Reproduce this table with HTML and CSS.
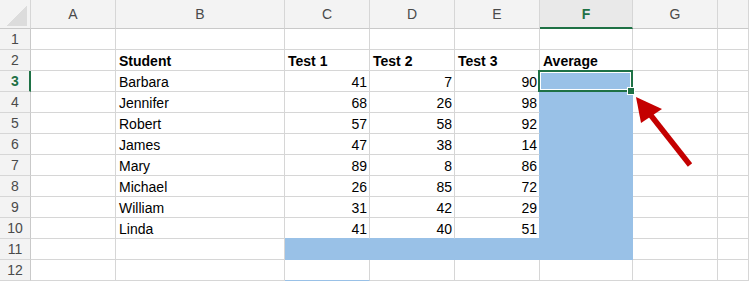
FILE: index.html
```html
<!DOCTYPE html>
<html lang="en">
<head>
<meta charset="utf-8">
<title>Test scores</title>
<link rel="stylesheet" href="styles.css">
</head>
<body>
<div class="sheet">
  <!-- column headers -->
  <div class="hd corner"><span class="tri"></span></div>
  <div class="hd">A</div>
  <div class="hd">B</div>
  <div class="hd">C</div>
  <div class="hd">D</div>
  <div class="hd">E</div>
  <div class="hd hd-active">F</div>
  <div class="hd">G</div>
  <div class="hd"></div>

  <!-- row 1 -->
  <div class="rh">1</div>
  <div class="c"></div><div class="c"></div><div class="c"></div><div class="c"></div><div class="c"></div><div class="c"></div><div class="c"></div><div class="c"></div>

  <!-- row 2 -->
  <div class="rh">2</div>
  <div class="c"></div>
  <div class="c b">Student</div>
  <div class="c b">Test 1</div>
  <div class="c b">Test 2</div>
  <div class="c b">Test 3</div>
  <div class="c b">Average</div>
  <div class="c"></div><div class="c"></div>

  <!-- row 3 -->
  <div class="rh rh-active">3</div>
  <div class="c"></div>
  <div class="c">Barbara</div>
  <div class="c n">41</div>
  <div class="c n">7</div>
  <div class="c n">90</div>
  <div class="c sel active"><span class="cursor"></span><span class="handle"></span></div>
  <div class="c"></div><div class="c"></div>

  <!-- row 4 -->
  <div class="rh">4</div>
  <div class="c"></div>
  <div class="c">Jennifer</div>
  <div class="c n">68</div>
  <div class="c n">26</div>
  <div class="c n edge-r">98</div>
  <div class="c sel"></div>
  <div class="c"></div><div class="c"></div>

  <!-- row 5 -->
  <div class="rh">5</div>
  <div class="c"></div>
  <div class="c">Robert</div>
  <div class="c n">57</div>
  <div class="c n">58</div>
  <div class="c n edge-r">92</div>
  <div class="c sel"></div>
  <div class="c"></div><div class="c"></div>

  <!-- row 6 -->
  <div class="rh">6</div>
  <div class="c"></div>
  <div class="c">James</div>
  <div class="c n">47</div>
  <div class="c n">38</div>
  <div class="c n edge-r">14</div>
  <div class="c sel"></div>
  <div class="c"></div><div class="c"></div>

  <!-- row 7 -->
  <div class="rh">7</div>
  <div class="c"></div>
  <div class="c">Mary</div>
  <div class="c n">89</div>
  <div class="c n">8</div>
  <div class="c n edge-r">86</div>
  <div class="c sel"></div>
  <div class="c"></div><div class="c"></div>

  <!-- row 8 -->
  <div class="rh">8</div>
  <div class="c"></div>
  <div class="c">Michael</div>
  <div class="c n">26</div>
  <div class="c n">85</div>
  <div class="c n edge-r">72</div>
  <div class="c sel"></div>
  <div class="c"></div><div class="c"></div>

  <!-- row 9 -->
  <div class="rh">9</div>
  <div class="c"></div>
  <div class="c">William</div>
  <div class="c n">31</div>
  <div class="c n">42</div>
  <div class="c n edge-r">29</div>
  <div class="c sel"></div>
  <div class="c"></div><div class="c"></div>

  <!-- row 10 -->
  <div class="rh">10</div>
  <div class="c"></div>
  <div class="c">Linda</div>
  <div class="c n edge-b">41</div>
  <div class="c n edge-b">40</div>
  <div class="c n edge-b edge-r">51</div>
  <div class="c sel"></div>
  <div class="c"></div><div class="c"></div>

  <!-- row 11 -->
  <div class="rh">11</div>
  <div class="c"></div>
  <div class="c"></div>
  <div class="c sel"></div>
  <div class="c sel"></div>
  <div class="c sel"></div>
  <div class="c sel"></div>
  <div class="c"></div><div class="c"></div>

  <!-- row 12 -->
  <div class="rh">12</div>
  <div class="c"></div>
  <div class="c"></div>
  <div class="c edge-b"></div>
  <div class="c"></div>
  <div class="c"></div>
  <div class="c"></div>
  <div class="c"></div><div class="c"></div>

  <!-- callout arrow pointing at the fill handle -->
  <svg class="arrow" width="749" height="281" viewBox="0 0 749 281" aria-hidden="true">
    <line x1="690" y1="165" x2="649" y2="113" stroke="#c40000" stroke-width="5.5"/>
    <polygon points="636,97 662,109 641,123" fill="#c40000"/>
  </svg>
</div>
</body>
</html>
```

FILE: styles.css
```css
* {
  box-sizing: border-box;
}

html, body {
  margin: 0;
  padding: 0;
  background: #ffffff;
}

body {
  font-family: "Liberation Sans", Arial, sans-serif;
  font-size: 14px;
  color: #000000;
  overflow: hidden;
}

.sheet {
  position: relative;
  display: grid;
  grid-template-columns: 31px 85px 169px 85px 85px 85px 93px 85px 1fr;
  grid-template-rows: 29px;
  grid-auto-rows: 21px;
  width: 749px;
  height: 281px;
  overflow: hidden;
}

/* column header strip */
.hd {
  background: #f3f3f3;
  border-right: 1px solid #d6d6d6;
  border-bottom: 1px solid #c9c9c9;
  color: #4a4a4a;
  font-size: 14px;
  text-align: center;
  line-height: 27px;
  padding-top: 1px;
}

.hd-active {
  background: #e9e9e9;
  border-bottom: 2px solid #1e7145;
  color: #1e7145;
  font-weight: bold;
}

.corner {
  display: flex;
  justify-content: flex-end;
  align-items: flex-end;
  padding: 0 3px 2px 0;
}

.tri {
  width: 20px;
  height: 20px;
  background: linear-gradient(to bottom right, transparent 50%, #dcdcdc 50%);
}

/* row number strip */
.rh {
  background: #f3f3f3;
  border-right: 1px solid #c9c9c9;
  border-bottom: 1px solid #d6d6d6;
  color: #4a4a4a;
  font-size: 14px;
  text-align: center;
  line-height: 20px;
}

.rh-active {
  border-right: 2px solid #1e7145;
  color: #1e7145;
  font-weight: bold;
  padding-left: 1px;
}

/* worksheet cells */
.c {
  border-right: 1px solid #d6d6d6;
  border-bottom: 1px solid #d6d6d6;
  padding: 2px 3px 0 3px;
  line-height: 19px;
  white-space: nowrap;
}

.b {
  font-weight: bold;
}

.n {
  text-align: right;
  padding-right: 2px;
}

/* selected range */
.sel {
  background: #99c1e7;
  border-right-color: #99c1e7;
  border-bottom-color: #99c1e7;
}

.edge-r {
  border-right-color: #99c1e7;
}

.edge-b {
  border-bottom-color: #99c1e7;
}

/* active cell */
.active {
  position: relative;
  border-right-color: #d6d6d6;
}

.cursor {
  position: absolute;
  left: -2px;
  top: -1px;
  width: 95px;
  height: 22px;
  border: 2px solid #1e7145;
  box-shadow: inset 0 0 0 1px #ffffff;
}

.handle {
  position: absolute;
  left: 87px;
  top: 16px;
  width: 8px;
  height: 8px;
  background: #1e7145;
  border: 1px solid #ffffff;
}

.arrow {
  position: absolute;
  left: 0;
  top: 0;
  pointer-events: none;
}
```
